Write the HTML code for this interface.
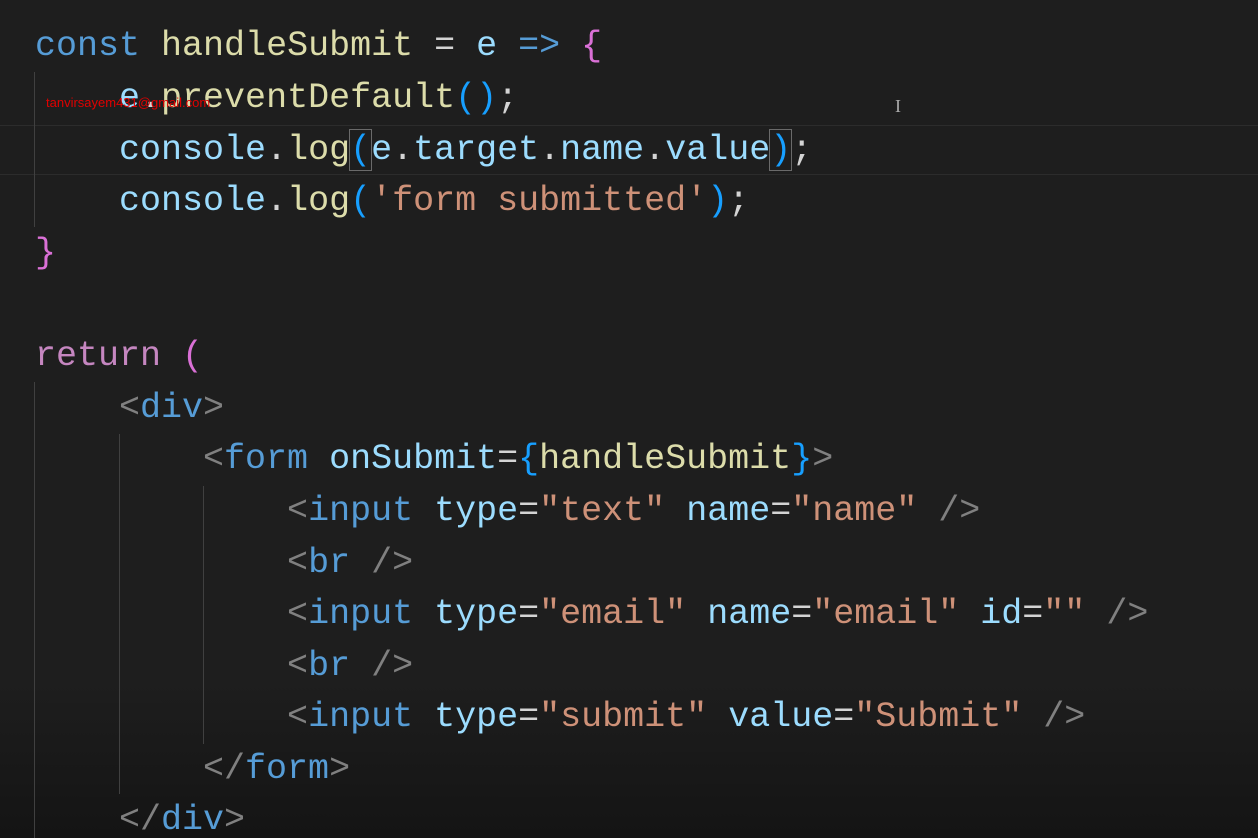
<!DOCTYPE html>
<html style="overflow:hidden"><head><meta charset="utf-8"><style>
html,body{margin:0;padding:0;overflow:hidden}
body{width:1258px;height:838px;overflow:hidden;background:linear-gradient(to bottom,#1e1e1e 0,#1e1e1e 680px,#141414 838px);position:relative;font-family:"Liberation Mono",monospace;font-size:35px}
.l{position:absolute;left:35px;height:52px;line-height:52px;white-space:pre;color:#d4d4d4}
.g{position:absolute;width:1px;background:#404040}
.k{color:#569cd6}.f{color:#dcdcaa}.v{color:#9cdcfe}.s{color:#ce9178}.p{color:#c586c0}.b{color:#179fff}.pk{color:#da70d6}.t{color:#808080}.w{color:#d4d4d4}
.hl{position:absolute;left:0;width:1258px;height:48px;top:125px;border-top:1px solid #2c2c2c;border-bottom:1px solid #2c2c2c}
.m{position:absolute;left:46px;top:95px;font-family:"Liberation Sans",sans-serif;font-size:13px;color:#e00000}
.br{outline:1px solid #6a6a6a}
</style></head><body>
<div class="hl"></div>
<div class="g" style="left:34px;top:72px;height:155px"></div>
<div class="g" style="left:34px;top:382px;height:456px"></div>
<div class="g" style="left:119px;top:434px;height:360px"></div>
<div class="g" style="left:203px;top:486px;height:258px"></div>
<div class="l" style="top:20px"><span class="k">const</span> <span class="f">handleSubmit</span> = <span class="v">e</span> <span class="k">=&gt;</span> <span class="pk">{</span></div>
<div class="l" style="top:72px">    <span class="v">e</span>.<span class="f">preventDefault</span><span class="b">()</span>;</div>
<div class="l" style="top:124px">    <span class="v">console</span>.<span class="f">log</span><span class="b br">(</span><span class="v">e</span>.<span class="v">target</span>.<span class="v">name</span>.<span class="v">value</span><span class="b br">)</span>;</div>
<div class="l" style="top:175px">    <span class="v">console</span>.<span class="f">log</span><span class="b">(</span><span class="s">'form submitted'</span><span class="b">)</span>;</div>
<div class="l" style="top:227px"><span class="pk">}</span></div>
<div class="l" style="top:330px"><span class="p">return</span> <span class="pk">(</span></div>
<div class="l" style="top:382px">    <span class="t">&lt;</span><span class="k">div</span><span class="t">&gt;</span></div>
<div class="l" style="top:433px">        <span class="t">&lt;</span><span class="k">form</span> <span class="v">onSubmit</span>=<span class="b">{</span><span class="f">handleSubmit</span><span class="b">}</span><span class="t">&gt;</span></div>
<div class="l" style="top:485px">            <span class="t">&lt;</span><span class="k">input</span> <span class="v">type</span>=<span class="s">"text"</span> <span class="v">name</span>=<span class="s">"name"</span> <span class="t">/&gt;</span></div>
<div class="l" style="top:537px">            <span class="t">&lt;</span><span class="k">br</span> <span class="t">/&gt;</span></div>
<div class="l" style="top:588px">            <span class="t">&lt;</span><span class="k">input</span> <span class="v">type</span>=<span class="s">"email"</span> <span class="v">name</span>=<span class="s">"email"</span> <span class="v">id</span>=<span class="s">""</span> <span class="t">/&gt;</span></div>
<div class="l" style="top:640px">            <span class="t">&lt;</span><span class="k">br</span> <span class="t">/&gt;</span></div>
<div class="l" style="top:691px">            <span class="t">&lt;</span><span class="k">input</span> <span class="v">type</span>=<span class="s">"submit"</span> <span class="v">value</span>=<span class="s">"Submit"</span> <span class="t">/&gt;</span></div>
<div class="l" style="top:743px">        <span class="t">&lt;/</span><span class="k">form</span><span class="t">&gt;</span></div>
<div class="l" style="top:794px">    <span class="t">&lt;/</span><span class="k">div</span><span class="t">&gt;</span></div>
<div class="m">tanvirsayem431@gmail.com</div>
<div style="position:absolute;left:895px;top:96px;color:#aaa;font-size:18px;font-family:'Liberation Serif',serif">I</div>
</body></html>
